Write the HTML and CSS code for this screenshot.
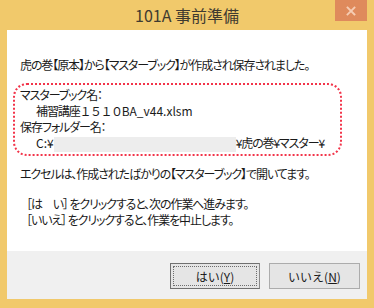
FILE: index.html
```html
<!DOCTYPE html>
<html lang="ja">
<head>
    <meta charset="UTF-8">
    <title>101A 事前準備</title>
    <link rel="stylesheet" href="styles.css">
</head>
<body>

<div class="window">
    <div class="titlebar">
        <span></span>
        <div class="title">101A 事前準備</div>
        <button class="close" aria-label="閉じる">
            <svg width="10" height="10" viewBox="0 0 10 10">
                <path d="M1.5 1.5 L8.5 8.5 M8.5 1.5 L1.5 8.5" stroke="#f6cdb4" stroke-width="1.8" stroke-linecap="square"/>
            </svg>
        </button>
    </div>
    <div class="client">
        <div class="message">
            <p class="line">虎の巻【原本】から【マスターブック】が作成され保存されました。</p>
            <div class="info">
                <p class="line">マスターブック名：</p>
                <p class="line indent">補習講座<span class="wide">１５１０</span><span class="latin">BA_v44.xlsm</span></p>
                <p class="line">保存フォルダー名：</p>
                <p class="line indent"><span class="latin">C:¥</span><span class="hidden-path"></span>¥虎の巻¥マスター¥</p>
            </div>
            <p class="line note">エクセルは、作成されたばかりの【マスターブック】で開いてます。</p>
            <div class="hints">
                <p class="line">［は　い］ をクリックすると、次の作業へ進みます。</p>
                <p class="line">［いいえ］ をクリックすると、作業を中止します。</p>
            </div>
        </div>
        <div class="footer">
            <button class="btn default"><span class="focus">はい(<u>Y</u>)</span></button>
            <button class="btn">いいえ(<u>N</u>)</button>
        </div>
    </div>
</div>

</body>
</html>
```

FILE: styles.css
```css
body {
    margin: 0;
    font-family: "Noto Sans CJK JP", "Noto Sans", sans-serif;
    font-feature-settings: "palt";
}
.window {
    width: 374px;
    height: 308px;
    box-sizing: border-box;
    background-color: #f1c96b;
    padding: 0 7px 9px 7px;
    display: flex;
    flex-direction: column;
}
.titlebar {
    height: 30px;
    margin: 0 -7px;
    display: grid;
    grid-template-columns: 1fr auto 1fr;
}
.title {
    font-size: 16px;
    line-height: 30px;
    color: #3f3a30;
}
.close {
    justify-self: end;
    align-self: start;
    width: 32px;
    height: 21px;
    margin-right: 7px;
    border: none;
    padding: 0;
    background-color: #df8a5c;
    display: flex;
    align-items: center;
    justify-content: center;
}
.client {
    flex: 1;
    display: flex;
    flex-direction: column;
    background-color: #fff;
}
.message {
    flex: 1;
    padding: 27px 0 0 13px;
    font-size: 12px;
    letter-spacing: -1.1px;
    color: #1a1a1a;
}
.line {
    margin: 0;
    line-height: 16px;
    white-space: nowrap;
}
.info {
    width: 329px;
    box-sizing: border-box;
    margin: 10px 0 0 -7px;
    padding: 2px 0 2px 5px;
    border: 2px dotted #f2344a;
    border-radius: 14px;
}
.indent {
    padding-left: 16px;
}
.wide {
    font-feature-settings: normal;
    letter-spacing: -1.5px;
}
.latin {
    letter-spacing: 0;
}
.hidden-path {
    display: inline-block;
    width: 182px;
    height: 15px;
    vertical-align: -4px;
    background-color: #ededed;
}
.note {
    margin-top: 10px;
}
.hints {
    margin-top: 14px;
    padding-left: 6px;
}
.footer {
    height: 48px;
    box-sizing: border-box;
    padding: 12px 7px 0 0;
    background-color: #f0f0f0;
    display: flex;
    justify-content: flex-end;
    align-items: flex-start;
    gap: 9px;
}
.btn {
    width: 91px;
    height: 26px;
    padding: 0;
    border: 1px solid #acacac;
    background-color: #e5e5e5;
    font-family: inherit;
    font-size: 12px;
    color: #1a1a1a;
    display: flex;
    align-items: center;
    justify-content: center;
}
.btn.default {
    width: 90px;
    border: 1px solid #707070;
    border-right-color: #8a8a8a;
    padding: 2px;
}
.focus {
    flex: 1;
    align-self: stretch;
    display: flex;
    align-items: center;
    justify-content: center;
    border: 1px dotted #6d6d6d;
}
```
